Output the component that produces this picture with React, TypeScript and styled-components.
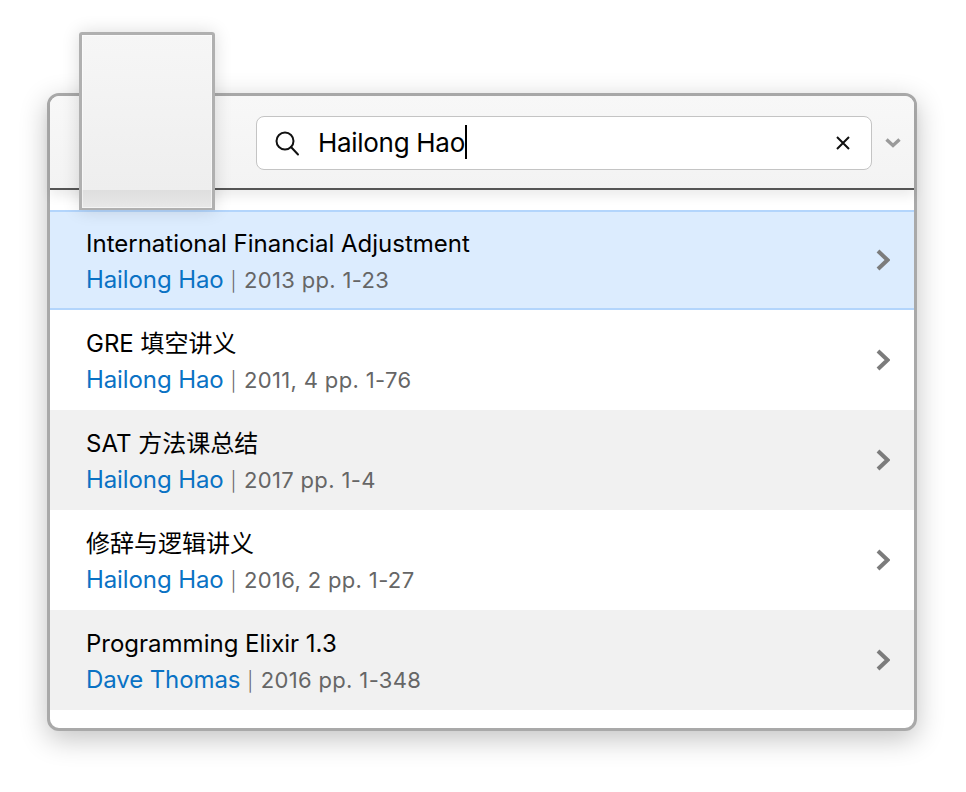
import React from 'react';
import styled, { createGlobalStyle } from 'styled-components';

const GlobalStyle = createGlobalStyle`
  html, body {
    margin: 0;
    background: #fff;
  }
  body {
    font-family: Inter, "Noto Sans CJK SC", sans-serif;
  }
`;

const Page = styled.div`
  width: 966px;
  height: 792px;
  padding: 93px 49px 0 47px;
  box-sizing: border-box;
  overflow: hidden;
`;

const Win = styled.div`
  position: relative;
  height: 638px;
  box-sizing: border-box;
  border: 3px solid #a9a9a9;
  border-radius: 12px;
  background: #fff;
  box-shadow: 0 8px 28px rgba(0, 0, 0, 0.24);
`;

const Toolbar = styled.div`
  position: relative;
  z-index: 1;
  height: 94px;
  box-sizing: border-box;
  padding: 20px 0 0 206px;
  display: flex;
  align-items: flex-start;
  background: linear-gradient(#f8f8f8, #f3f3f3);
  border-bottom: 2px solid #555;
  border-radius: 9px 9px 0 0;
  box-shadow: 0 6px 12px rgba(0, 0, 0, 0.08);
`;

const SearchBox = styled.div`
  width: 616px;
  height: 54px;
  box-sizing: border-box;
  background: #fff;
  border: 1px solid #c4c4c4;
  border-radius: 8px;
  display: flex;
  align-items: center;
  padding: 0 20px 0 17px;
`;

const SearchText = styled.span`
  flex: 1;
  margin-left: 18px;
  padding-bottom: 2px;
  font-size: 26px;
  color: #000;
  display: flex;
  align-items: center;
  letter-spacing: -0.3px;
`;

const Caret = styled.i`
  display: block;
  width: 2px;
  height: 34px;
  background: #000;
`;

const DropButton = styled.div`
  margin: 0 0 0 13px;
  height: 54px;
  display: flex;
  align-items: center;
`;

const Tab = styled.div`
  position: absolute;
  z-index: 2;
  left: 29px;
  top: -64px;
  width: 136px;
  height: 178px;
  box-sizing: border-box;
  border: 3px solid #b0b0b0;
  border-bottom-width: 2px;
  border-radius: 3px 3px 0 0;
  background: linear-gradient(#f6f6f6, #eeeeee 89.6%, #dedede 89.7%, #e8e8e8);
  box-shadow: 0 0 18px rgba(0, 0, 0, 0.14), inset 0 0 0 1px rgba(255, 255, 255, 0.5);
`;

const List = styled.div`
  padding-top: 20px;
`;

const Row = styled.div<{ $tone: 'selected' | 'plain' | 'alt' }>`
  height: 100px;
  box-sizing: border-box;
  padding: 0 24px 0 36px;
  display: flex;
  justify-content: space-between;
  align-items: center;
  background: ${(p) =>
    p.$tone === 'selected' ? '#dcecfe' : p.$tone === 'alt' ? '#f1f1f1' : '#fff'};
  ${(p) =>
    p.$tone === 'selected'
      ? 'border-top: 2px solid #b3d5fc; border-bottom: 2px solid #b3d5fc;'
      : ''}
`;

const RowText = styled.div`
  display: flex;
  flex-direction: column;
  gap: 9px;
  margin-top: 4px;
`;

const Title = styled.div`
  font-size: 24px;
  line-height: 27px;
  color: #000;
`;

const Meta = styled.div`
  font-size: 22px;
  line-height: 27px;
  letter-spacing: 0.35px;
  color: #666;
  white-space: nowrap;
`;

const Author = styled.span`
  font-size: 24px;
  letter-spacing: -0.1px;
  color: #0a72c4;
`;

const Sep = styled.span`
  margin: 0 7px;
  font-size: 19px;
  font-weight: 300;
`;

const Chevron = styled.svg`
  display: block;
`;

const rows = [
  { title: 'International Financial Adjustment', author: 'Hailong Hao', info: '2013 pp. 1-23', tone: 'selected' as const },
  { title: 'GRE 填空讲义', author: 'Hailong Hao', info: '2011, 4 pp. 1-76', tone: 'plain' as const },
  { title: 'SAT 方法课总结', author: 'Hailong Hao', info: '2017 pp. 1-4', tone: 'alt' as const },
  { title: '修辞与逻辑讲义', author: 'Hailong Hao', info: '2016, 2 pp. 1-27', tone: 'plain' as const },
  { title: 'Programming Elixir 1.3', author: 'Dave Thomas', info: '2016 pp. 1-348', tone: 'alt' as const },
];

export default function App() {
  return (
    <Page>
      <GlobalStyle />
      <Win>
        <Tab />
        <Toolbar>
          <SearchBox>
            <svg width="26" height="26" viewBox="0 0 26 26" fill="none" stroke="#111" strokeWidth="2">
              <circle cx="11" cy="11" r="8.5" />
              <path d="M17 17 L24 24.5" strokeLinecap="round" />
            </svg>
            <SearchText>
              Hailong Hao
              <Caret />
            </SearchText>
            <svg width="16" height="16" viewBox="0 0 16 16" fill="none" stroke="#111" strokeWidth="2">
              <path d="M2 2 L14 14 M14 2 L2 14" />
            </svg>
          </SearchBox>
          <DropButton>
            <svg width="16" height="10" viewBox="0 0 16 10" fill="none" stroke="#9a9a9a" strokeWidth="3.4">
              <path d="M1.5 1.5 L8 7.5 L14.5 1.5" />
            </svg>
          </DropButton>
        </Toolbar>
        <List>
          {rows.map((r) => (
            <Row key={r.title} $tone={r.tone}>
              <RowText>
                <Title>{r.title}</Title>
                <Meta>
                  <Author>{r.author}</Author>
                  <Sep>|</Sep>
                  {r.info}
                </Meta>
              </RowText>
              <Chevron width="14" height="22" viewBox="0 0 14 22" fill="none" stroke="#7c7c7c" strokeWidth="4">
                <path d="M2 2 L11.5 11 L2 20" />
              </Chevron>
            </Row>
          ))}
        </List>
      </Win>
    </Page>
  );
}
